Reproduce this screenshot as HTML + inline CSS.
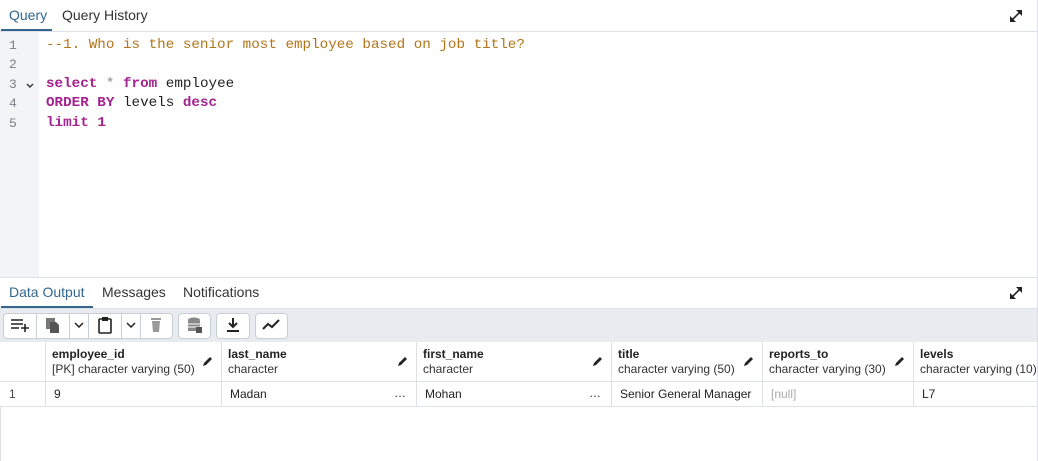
<!DOCTYPE html>
<html><head><style>
*{margin:0;padding:0;box-sizing:border-box}
body{width:1038px;height:461px;overflow:hidden;background:#fff;font-family:"Liberation Sans",sans-serif;position:relative;color:#222}
.abs{position:absolute}
.tab{position:absolute;font-size:14px;color:#333}
.code{font-family:"Liberation Mono",monospace;font-size:14.25px;position:absolute;left:46px;white-space:pre;color:#222}
.ln{font-family:"Liberation Mono",monospace;font-size:13px;position:absolute;left:9px;color:#7a7f87}
.kw{color:#a3228f;font-weight:bold}
.cm{color:#b2741b}
.btn{position:absolute;top:313px;height:26px;border:1px solid #c9ced6;border-radius:4px;background:#fff}
.hd{position:absolute;top:342px;height:39px;border-right:1px solid #dde0e6;font-size:12px;padding:5px 0 0 6px;line-height:15px}
.hd b{color:#222}
.hd span{color:#333}
.cell{position:absolute;top:381px;height:25px;border-right:1px solid #dde0e6;font-size:12px;padding:6px 0 0 8px;color:#222}
.pen{position:absolute;top:13px;width:12px;height:12px}
</style></head><body>
<div class="abs" style="left:0;top:0;width:1038px;height:32px;border-bottom:1px solid #dde0e6"></div>
<div class="tab" style="left:9px;top:7px;color:#326690">Query</div>
<div class="abs" style="left:1px;top:29px;width:51px;height:2px;background:#326690"></div>
<div class="tab" style="left:62px;top:7px">Query History</div>
<svg class="abs" style="left:1009px;top:9px" width="14" height="14" viewBox="0 0 14 14"><path d="M2 12L12 2" stroke="#222" stroke-width="1.6"/><path d="M7 1h6v6z M1 7v6h6z" fill="#222"/></svg>
<div class="abs" style="left:0;top:32px;width:39px;height:245px;background:#f3f4f6"></div>
<div class="ln" style="top:38px">1</div><div class="ln" style="top:57px">2</div><div class="ln" style="top:77px">3</div><div class="ln" style="top:96px">4</div><div class="ln" style="top:116px">5</div>
<svg class="abs" style="left:26px;top:83px" width="8" height="6"><path d="M1 1l3 3 3-3" stroke="#333" stroke-width="1.4" fill="none"/></svg>
<div class="code cm" style="top:37px">--1. Who is the senior most employee based on job title?</div>
<div class="code" style="top:76px"><span class="kw">select</span> <span style="color:#888">*</span> <span class="kw">from</span> employee</div>
<div class="code" style="top:95px"><span class="kw">ORDER BY</span> levels <span class="kw">desc</span></div>
<div class="code" style="top:115px"><span class="kw">limit</span> <span class="kw">1</span></div>
<div class="abs" style="left:0;top:277px;width:1038px;height:32px;border-top:1px solid #dde0e6;border-bottom:1px solid #dde0e6"></div>
<div class="tab" style="left:9px;top:284px;color:#326690">Data Output</div>
<div class="abs" style="left:1px;top:306px;width:92px;height:2px;background:#326690"></div>
<div class="tab" style="left:102px;top:284px">Messages</div>
<div class="tab" style="left:183px;top:284px">Notifications</div>
<svg class="abs" style="left:1009px;top:286px" width="14" height="14" viewBox="0 0 14 14"><path d="M2 12L12 2" stroke="#222" stroke-width="1.6"/><path d="M7 1h6v6z M1 7v6h6z" fill="#222"/></svg>
<div class="abs" style="left:0;top:309px;width:1038px;height:33px;background:#e8ebf0"></div>
<div class="btn" style="left:3px;width:170px"></div>
<div class="abs" style="left:36px;top:314px;width:1px;height:24px;background:#c9ced6"></div>
<div class="abs" style="left:69px;top:314px;width:1px;height:24px;background:#c9ced6"></div>
<div class="abs" style="left:88px;top:314px;width:1px;height:24px;background:#c9ced6"></div>
<div class="abs" style="left:121px;top:314px;width:1px;height:24px;background:#c9ced6"></div>
<div class="abs" style="left:140px;top:314px;width:1px;height:24px;background:#c9ced6"></div>
<svg class="abs" style="left:10px;top:317px" width="20" height="16"><path d="M1 3h12M1 7h12M1 11h8M15 7v8M11 11h8" stroke="#222" stroke-width="1.6"/></svg>
<svg class="abs" style="left:45px;top:317px" width="16" height="17"><rect x="1" y="1" width="9" height="11" fill="#777"/><path d="M5 5h6l3 3v8H5z" fill="#555"/></svg>
<svg class="abs" style="left:74px;top:322px" width="10" height="6"><path d="M1 1l4 4 4-4" stroke="#222" stroke-width="1.5" fill="none"/></svg>
<svg class="abs" style="left:97px;top:316px" width="16" height="18"><rect x="2" y="3" width="12" height="14" rx="1" stroke="#222" stroke-width="1.6" fill="none"/><rect x="5" y="1" width="6" height="4" fill="#222"/></svg>
<svg class="abs" style="left:126px;top:322px" width="10" height="6"><path d="M1 1l4 4 4-4" stroke="#222" stroke-width="1.5" fill="none"/></svg>
<svg class="abs" style="left:150px;top:317px" width="12" height="16"><rect x="1" y="1" width="10" height="2" fill="#999"/><path d="M2 4h8l-1 11H3z" fill="#999"/></svg>
<div class="btn" style="left:178px;width:33px"></div>
<svg class="abs" style="left:187px;top:317px" width="16" height="17"><ellipse cx="7" cy="3" rx="6" ry="2.5" fill="#888"/><rect x="1" y="4" width="12" height="10" fill="#888"/><path d="M1 7h12M1 10h12" stroke="#fff"/><rect x="9" y="10" width="6" height="6" fill="#555"/></svg>
<div class="btn" style="left:216px;width:34px"></div>
<svg class="abs" style="left:226px;top:317px" width="14" height="16"><path d="M7 1v8M3 6l4 4 4-4" stroke="#222" stroke-width="2" fill="none"/><path d="M1 14h12" stroke="#222" stroke-width="2"/></svg>
<div class="btn" style="left:255px;width:33px"></div>
<svg class="abs" style="left:262px;top:319px" width="18" height="12"><path d="M1 10l5-5 4 3 7-7" stroke="#222" stroke-width="2" fill="none"/></svg>
<div class="abs" style="left:0;top:342px;width:1038px;height:65px;border-bottom:1px solid #dde0e6"></div>
<div class="abs" style="left:0;top:381px;width:1038px;height:1px;background:#dde0e6"></div>
<div class="hd" style="left:0;width:46px"></div>
<div class="hd" style="left:46px;width:176px"><b>employee_id</b><br><span>[PK] character varying (50)</span></div>
<div class="hd" style="left:222px;width:195px"><b>last_name</b><br><span>character</span></div>
<div class="hd" style="left:417px;width:195px"><b>first_name</b><br><span>character</span></div>
<div class="hd" style="left:612px;width:151px"><b>title</b><br><span>character varying (50)</span></div>
<div class="hd" style="left:763px;width:151px"><b>reports_to</b><br><span>character varying (30)</span></div>
<div class="hd" style="left:914px;width:130px;border:none;white-space:nowrap"><b>levels</b><br><span>character varying (10)</span></div>
<svg class="pen" style="left:202px;top:355px" viewBox="0 0 12 12"><path d="M1 11l1-3 6-6 2 2-6 6z" fill="#222"/></svg>
<svg class="pen" style="left:397px;top:355px" viewBox="0 0 12 12"><path d="M1 11l1-3 6-6 2 2-6 6z" fill="#222"/></svg>
<svg class="pen" style="left:592px;top:355px" viewBox="0 0 12 12"><path d="M1 11l1-3 6-6 2 2-6 6z" fill="#222"/></svg>
<svg class="pen" style="left:743px;top:355px" viewBox="0 0 12 12"><path d="M1 11l1-3 6-6 2 2-6 6z" fill="#222"/></svg>
<svg class="pen" style="left:894px;top:355px" viewBox="0 0 12 12"><path d="M1 11l1-3 6-6 2 2-6 6z" fill="#222"/></svg>
<div class="cell" style="left:0;width:46px;padding-left:9px;color:#444">1</div>
<div class="cell" style="left:46px;width:176px">9</div>
<div class="cell" style="left:222px;width:195px">Madan<span style="position:absolute;right:10px;top:5px">…</span></div>
<div class="cell" style="left:417px;width:195px">Mohan<span style="position:absolute;right:10px;top:5px">…</span></div>
<div class="cell" style="left:612px;width:151px">Senior General Manager</div>
<div class="cell" style="left:763px;width:151px;color:#aaa">[null]</div>
<div class="cell" style="left:914px;width:130px;border:none">L7</div>
<div class="abs" style="left:0;top:407px;width:1px;height:54px;background:#dde0e6"></div>
<div class="abs" style="left:1037px;top:0;width:1px;height:461px;background:#dde0e6"></div>
</body></html>
